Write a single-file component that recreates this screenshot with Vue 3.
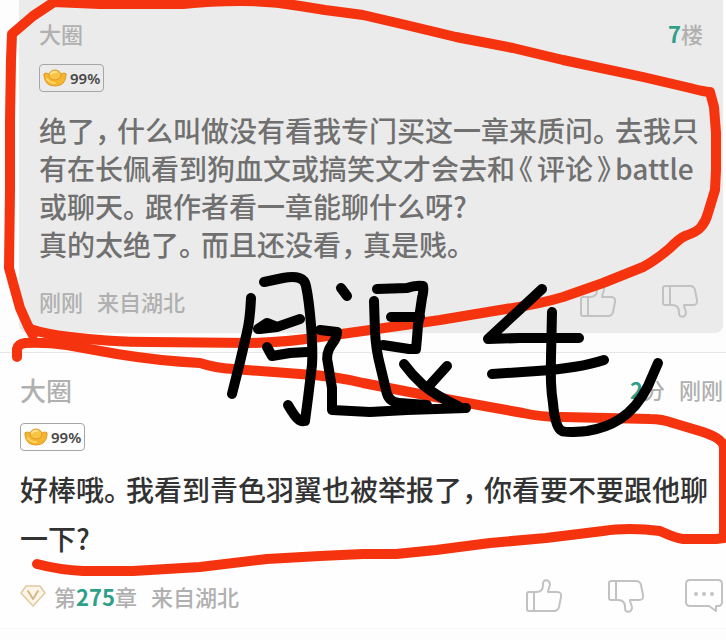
<template>
  <main class="page">
    <article v-for="c in comments" :key="c.id" class="comment" :class="c.kind">
      <header class="head">
        <h2 class="name">{{ c.name }}</h2>
        <div class="side">
          <span><b class="num">{{ c.count }}</b>{{ c.unit }}</span>
          <span v-if="c.time">{{ c.time }}</span>
        </div>
      </header>
      <div class="badge">
        <svg class="ingot" viewBox="0 0 24 18" aria-hidden="true">
          <path d="M1 7Q0 4 3 4Q5 4 7 6Q12 9 17 6Q19 4 21 4Q24 4 23 7Q22 17 12 17Q2 17 1 7Z" fill="#f6b52e" stroke="#e09a2c" />
          <ellipse cx="12" cy="6" rx="6" ry="5" fill="#f9c443" stroke="#e09a2c" />
          <path d="M8 5Q10 2 13 3" fill="none" stroke="#fde391" stroke-width="2" stroke-linecap="round" />
          <path d="M4 10Q7 14 12 14" fill="none" stroke="#fbd667" stroke-width="2" stroke-linecap="round" />
        </svg>
        <span>{{ c.score }}</span>
      </div>
      <p class="text">
        <template v-for="(line, i) in c.lines" :key="i"><br v-if="i"><template v-for="(s, j) in split(line)" :key="j"><span v-if="punctClass(s)" :class="punctClass(s)">{{ s }}</span><template v-else>{{ s }}</template></template></template>
      </p>
      <footer class="foot">
        <div class="meta">
          <svg v-if="c.chapter" class="vip" viewBox="0 0 26 22" aria-hidden="true">
            <path d="M6 1H20L25 8L13 21L1 8Z" fill="#fdf6e8" stroke="#dfc9a0" stroke-width="1.5" stroke-linejoin="round" />
            <path d="M8 6L13 14L18 6" fill="none" stroke="#d3b988" stroke-width="2" stroke-linecap="round" stroke-linejoin="round" />
          </svg>
          <span v-if="c.chapter" class="chapter">第<b class="num">{{ c.chapter }}</b>章</span>
          <span v-if="c.posted" class="posted">{{ c.posted }}</span>
          <span>{{ c.from }}</span>
        </div>
        <div class="actions">
          <button type="button" class="thumb" aria-label="赞">
            <svg viewBox="0 0 38 36"><path :d="thumb" /></svg>
          </button>
          <button type="button" class="thumb" aria-label="踩">
            <svg viewBox="0 0 38 36"><g transform="matrix(1 0 0 -1 0 36)"><path :d="thumb" /></g></svg>
          </button>
          <button v-if="c.reply" type="button" aria-label="回复">
            <svg viewBox="0 0 38 36">
              <path d="M5 2H33Q37 2 37 6V24Q37 28 33 28H31V33L24 28H5Q1 28 1 24V6Q1 2 5 2Z" />
              <path class="dots" d="M11 16h0M19 16h0M27 16h0" />
            </svg>
          </button>
        </div>
      </footer>
    </article>

    <svg class="ink" viewBox="0 0 726 640" aria-hidden="true">
      <g class="red">
        <path v-for="d in red" :key="d" :d="d" />
      </g>
      <g class="black">
        <path v-for="d in black" :key="d" :d="d" />
      </g>
    </svg>
  </main>
</template>

<script setup>
const comments = [
  {
    id: 1,
    kind: 'quoted',
    name: '大圈',
    count: '7',
    unit: '楼',
    score: '99%',
    lines: [
      '绝了，什么叫做没有看我专门买这一章来质问。去我只有在长佩看到狗血文或搞笑文才会去和《评论》battle或聊天。跟作者看一章能聊什么呀?',
      '真的太绝了。而且还没看，真是贱。'
    ],
    posted: '刚刚',
    from: '来自湖北'
  },
  {
    id: 2,
    kind: 'plain',
    name: '大圈',
    count: '2',
    unit: '分',
    time: '刚刚',
    score: '99%',
    lines: ['好棒哦。我看到青色羽翼也被举报了，你看要不要跟他聊一下?'],
    chapter: '275',
    from: '来自湖北',
    reply: true
  }
]

// punctuation uses half-width glyph boxes with its own spacing
const split = (line) => line.split(/([，。《》])/).filter(Boolean)
const punctClass = (s) => {
  if (/^[《》]$/.test(s)) return 'bracket'
  return /^[，。]$/.test(s) ? 'stop' : ''
}

const thumb = 'M4 14H11C16 14 18 11 18 7V6C18 1 24 1 25 6C25 9 23 11 23 14H32Q37 14 36 19L34 29Q33 33 29 33H4Q2 33 2 31V16Q2 14 4 14ZM9 14V33'

const red = [
  'M54 2L33 16L12 34L11 60L10 120L10 190L9 268L15 290L20 308L28 326L33 335',
  'M30 329Q45 334 70 337Q110 342 150 342L250 343Q290 342 320 337L363 331L440 320L506 309Q540 304 563 297L603 283L643 267Q656 260 670 248Q680 238 685 236Q697 232 701 227Q706 221 708 213L715 190L716 170V133L714 107L710 92Q705 92 690 88L643 77L563 60L513 48L456 37L406 25L363 15L325 10L300 6Q270 1 240 1Q210 1 183 4H100L53 2',
  'M17 357V349Q18 344 25 343Q45 342 67 345L117 354Q160 361 200 363Q215 368 233 369L300 374Q335 376 363 383L430 396L473 404L523 413Q540 417 563 417L650 419Q662 419 673 423L703 432Q724 439 724 448V537',
  'M724 538L716 539H683Q675 538 660 531Q645 529 630 529Q615 529 603 531L546 538L490 543L436 550L396 554H363L320 556L267 559L200 567L133 571H83Q60 570 37 564'
]

const black = [
  // 腿
  'M251 298Q250 320 247 332L240 362L232 394',
  'M264 282L283 278Q304 274 306 286Q309 300 311 325Q313 350 312 365L308 398L305 421Q301 422 298 419Q295 417 288 405',
  'M258 329L267 323L277 327L300 319M260 329L277 327',
  'M267 347L272 356L290 353L307 352',
  'M341 288L347 296',
  'M320 330L337 332Q337 338 332 344Q325 354 328 364L332 388V410L370 412L407 410L466 408',
  'M377 289L407 288Q415 285 423 286Q424 290 422 298L418 325L417 338L416 349H409L383 345',
  'M391 317H420',
  'M374 301L375 332Q376 350 380 365L386 390Q388 402 399 403L427 405',
  'M404 364Q412 375 423 385Q438 397 458 406',
  'M447 366L428 387',
  // 毛
  'M542 289L488 339L520 338H579',
  'M492 374L537 371Q580 368 604 360',
  'M552 312L551 357Q550 385 553 403Q555 428 562 431Q566 433 587 431Q606 428 620 419Q637 408 648 386L658 363'
]
</script>

<style>
body {
  margin: 0;
  background: #fdfdfd;
}
</style>

<style scoped>
.page {
  position: relative;
  overflow: hidden;
  font-family: "Noto Sans CJK SC", sans-serif;
  color: #b0b0b0;
  font-size: 22px;
  font-weight: 500;
}
.comment {
  display: flex;
  flex-direction: column;
}
.quoted {
  margin: 0 3px 19px 19px;
  padding: 18px 20px 12px;
  background: #ebebeb;
  border-radius: 0 0 8px 8px;
}
.plain {
  padding: 22px 3px 12px 20px;
  border-top: 1px solid #e6e6e6;
  border-bottom: 1px solid #f8f8f8;
  background: #fefefe;
}
.head {
  display: flex;
  justify-content: space-between;
  align-items: center;
  height: 30px;
}
.plain .head {
  height: 28px;
}
.name {
  margin: 0;
  font-size: 22px;
  font-weight: 500;
}
.plain .name {
  font-size: 26px;
}
.side {
  display: flex;
  gap: 14px;
}
.num {
  color: #2f9f88;
  font-weight: 700;
}
.badge {
  display: flex;
  align-items: center;
  align-self: flex-start;
  gap: 3px;
  height: 26px;
  margin-top: 16px;
  padding: 0 3px;
  border: 1px solid #a6a6a6;
  border-radius: 4px;
  color: #484848;
  font: 600 15px "Noto Sans", sans-serif;
}
.plain .badge {
  margin-top: 20px;
}
.ingot {
  width: 24px;
  height: 18px;
}
.text {
  margin: 19px 0 18px;
  color: #707070;
  font-size: 28px;
  font-weight: 500;
  line-height: 38px;
}
.plain .text {
  margin: 14px 0 13px;
  color: #323232;
  line-height: 49px;
}
.stop,
.bracket {
  font-feature-settings: "halt";
}
.stop {
  margin-right: 8px;
}
.bracket {
  margin: 0 4px;
}
.foot,
.meta,
.actions {
  display: flex;
  align-items: center;
}
.foot {
  justify-content: space-between;
  height: 40px;
}
.vip {
  width: 26px;
  height: 22px;
  margin-right: 8px;
}
.chapter,
.posted {
  margin-right: 14px;
}
.actions {
  gap: 36px;
}
button {
  display: flex;
  padding: 0;
  border: 0;
  background: none;
  cursor: pointer;
}
.thumb {
  padding: 0 4px;
}
button svg {
  width: 38px;
  height: 36px;
  fill: none;
  stroke: #c2c2c2;
  stroke-width: 2;
  stroke-linejoin: round;
}
.dots {
  stroke-width: 4;
  stroke-linecap: round;
}
.ink {
  position: absolute;
  top: 0;
  left: 0;
  width: 100%;
  fill: none;
  stroke-linecap: round;
  stroke-linejoin: round;
  stroke-width: 10;
  pointer-events: none;
}
.red {
  stroke: #f5330f;
}
.black {
  stroke: #000;
}
</style>
